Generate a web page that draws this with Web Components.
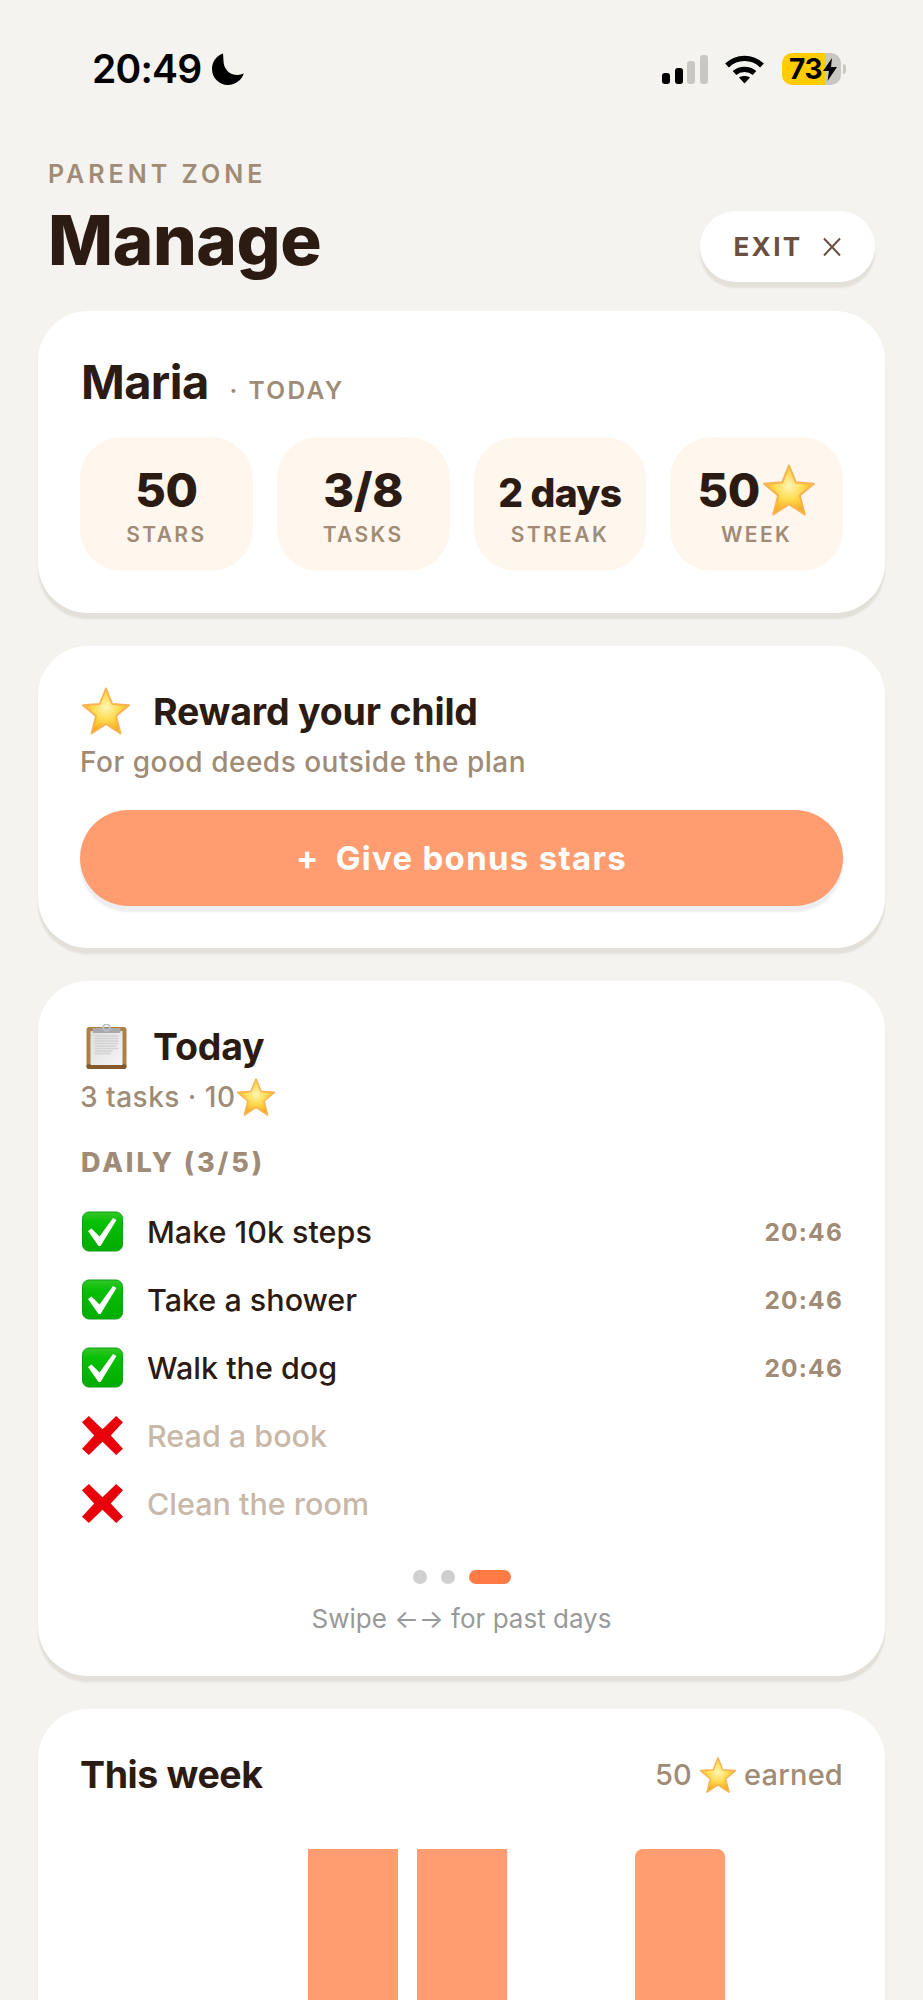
<!DOCTYPE html>
<html lang="en">
<head>
<meta charset="utf-8">
<title>Manage</title>
<style>
html, body { margin: 0; height: 2000px; overflow: hidden; background: #f5f3ef; }
body { font-family: Inter, "Liberation Sans", sans-serif; color: #2c1b12; }
</style>
</head>
<body>
<parent-screen>
  <status-bar slot="top"></status-bar>
  <page-header slot="top"></page-header>

  <app-card>
    <child-summary name="Maria" when="· TODAY">
      <stat-tile label="STARS">50</stat-tile>
      <stat-tile label="TASKS">3/8</stat-tile>
      <stat-tile label="STREAK" small>2 days</stat-tile>
      <stat-tile label="WEEK">50<emoji-icon name="star" size="54" style="margin-left:2px"></emoji-icon></stat-tile>
    </child-summary>
  </app-card>

  <app-card>
    <card-title icon="star" text="Reward your child"></card-title>
    <card-note>For good deeds outside the plan</card-note>
    <bonus-button>Give bonus stars</bonus-button>
  </app-card>

  <app-card>
    <card-title icon="clipboard" size="45" text="Today"></card-title>
    <card-note>3 tasks · 10<emoji-icon name="star" size="40"></emoji-icon></card-note>
    <task-list heading="DAILY (3/5)">
      <task-row done time="20:46">Make 10k steps</task-row>
      <task-row done time="20:46">Take a shower</task-row>
      <task-row done time="20:46">Walk the dog</task-row>
      <task-row>Read a book</task-row>
      <task-row>Clean the room</task-row>
    </task-list>
    <page-dots></page-dots>
  </app-card>

  <app-card>
    <week-chart></week-chart>
  </app-card>
</parent-screen>

<script>
const screenTemplate = document.createElement("template");
screenTemplate.innerHTML = `
<style>
:host { display: block; height: 2000px; overflow: hidden; }
.cards { display: flex; flex-direction: column; gap: 33px; padding: 0 38px; }
</style>
<slot name="top"></slot>
<div class="cards"><slot></slot></div>
`;

class ParentScreen extends HTMLElement {
  constructor() {
    super();
    this.attachShadow({ mode: "open" }).appendChild(screenTemplate.content.cloneNode(true));
  }
}

const statusTemplate = document.createElement("template");
statusTemplate.innerHTML = `
<style>
:host { display: flex; justify-content: space-between; align-items: center; height: 32px; padding: 53px 77px 0 92px; color: #000; }
.left, .right { display: flex; align-items: center; }
.time { font: 600 39px/32px Inter, sans-serif; letter-spacing: -0.8px; width: 118px; }
.moon { margin-left: 2px; }
.signal { display: flex; align-items: flex-end; gap: 4.7px; height: 30px; }
.signal i { display: block; width: 8px; border-radius: 3px; background: #c8c7c3; }
.signal i.on { background: #000; }
.wifi { margin-left: 17px; }
.battery { display: flex; position: relative; margin-left: 18px; width: 59px; height: 32px; border-radius: 10px; overflow: hidden; background: linear-gradient(90deg, #ffcc00 43px, #c8c7c3 43px); }
.battery span { font: 700 28px/32px Inter, sans-serif; padding-left: 7px; letter-spacing: -0.4px; }
.battery svg { position: absolute; left: 41px; top: 5px; }
.nub { width: 3px; height: 10px; margin-left: 2px; background: #c8c7c3; border-radius: 0 3px 3px 0; }
</style>
<div class="left">
  <span class="time">20:49</span>
  <svg class="moon" width="32" height="32" viewBox="0 0 32 32"><path d="M11 .5C4.500 2.500 0 8.800 0 16 0 24.800 7.200 32 16 32 23.500 32 29.800 27 31.800 20.300 30 21.500 27.800 22 25.500 22 17.500 22 11.500 15.800 11.500 8 11.500 5.300 11.100 2.800 11 .5Z" fill="#000"/></svg>
</div>
<div class="right">
  <div class="signal"><i class="on" style="height:11px"></i><i class="on" style="height:16px"></i><i style="height:23px"></i><i style="height:29px"></i></div>
  <svg class="wifi" width="39" height="30" viewBox="0 0 39 30" fill="none" stroke="#000" stroke-width="5.4">
    <path d="M2 11.500C12 2 27 2 37 11.500"/><path d="M9.500 19C15 14.200 24 14.200 29.500 19"/>
    <path d="M14 23.600C17 21.600 22 21.600 25 23.600L19.500 29.500Z" fill="#000" stroke="none"/>
  </svg>
  <div class="battery"><span>73</span>
    <svg width="14" height="23" viewBox="0 0 14 23"><path d="M9 0 0 13H6L4.500 23 14 9H8Z" fill="#000"/></svg>
  </div>
  <div class="nub"></div>
</div>
`;

class StatusBar extends HTMLElement {
  constructor() {
    super();
    this.attachShadow({ mode: "open" }).appendChild(statusTemplate.content.cloneNode(true));
  }
}

const headerTemplate = document.createElement("template");
headerTemplate.innerHTML = `
<style>
:host { display: block; height: 226px; padding: 74px 48px 0 48px; box-sizing: border-box; }
.eyebrow { font: 600 25px/30px Inter, sans-serif; letter-spacing: 4px; color: #a08c76; }
.row { display: flex; justify-content: space-between; align-items: flex-start; }
h1 { margin: 0; font: 800 69px/80px Inter, sans-serif; letter-spacing: -0.4px; color: #2c1b12; padding-top: 11px; }
.exit { display: flex; align-items: center; justify-content: center; gap: 19px; width: 175px; height: 71px; margin-top: 22px; border-radius: 36px; background: #fff; box-shadow: 0 6px 2px rgba(70,50,30,.1); font: 700 26px/1 Inter, sans-serif; letter-spacing: 2.4px; color: #6b4f3f; }
</style>
<div class="eyebrow">PARENT ZONE</div>
<div class="row">
  <h1>Manage</h1>
  <div class="exit">EXIT
    <svg width="20" height="20" viewBox="0 0 20 20" stroke="#6b4f3f" stroke-width="2"><path d="M2 1.500 18 18.500M18 1.500 2 18.500"/></svg>
  </div>
</div>
`;

class PageHeader extends HTMLElement {
  constructor() {
    super();
    this.attachShadow({ mode: "open" }).appendChild(headerTemplate.content.cloneNode(true));
  }
}

const cardTemplate = document.createElement("template");
cardTemplate.innerHTML = `
<style>
:host { display: block; padding: 42px; background: #fff; border-radius: 50px; box-shadow: 0 6px 2px rgba(70,50,30,.1); }
</style>
<slot></slot>
`;

class AppCard extends HTMLElement {
  constructor() {
    super();
    this.attachShadow({ mode: "open" }).appendChild(cardTemplate.content.cloneNode(true));
  }
}

const emojiShapes = {
  star: `<svg viewBox="0 0 100 100" width="100%" height="100%">
    <defs><radialGradient id="s" cx="50%" cy="42%" r="55%"><stop offset="0" stop-color="#fff6b8"/><stop offset=".5" stop-color="#ffdc50"/><stop offset="1" stop-color="#f7a81b"/></radialGradient></defs>
    <path d="M50 5 62.500 36 96 38.500 70 60 79 95 50 76 21 95 30 60 4 38.500 37.500 36Z" fill="url(#s)" stroke="#f8b452" stroke-width="4" stroke-linejoin="round"/></svg>`,
  check: `<svg viewBox="0 0 41 40" width="100%" height="100%">
    <defs><linearGradient id="c" x1="0" y1="0" x2="0" y2="1"><stop offset="0" stop-color="#35c628"/><stop offset=".25" stop-color="#06c006"/><stop offset="1" stop-color="#00ac00"/></linearGradient></defs>
    <rect x=".5" y=".5" width="40" height="39" rx="6.500" fill="url(#c)" stroke="#0c9f12"/>
    <path d="M6 19.500 9.500 17 17.500 25 31 6.500 34.500 8.500 18.500 34.500H16.500Z" fill="#fff"/></svg>`,
  cross: `<svg viewBox="0 0 42 40" width="100%" height="100%">
    <path d="M7 0 21 13.500 35 0 42 6.500 29.500 20 42 33.500 35 40 21 26.500 7 40 0 33.500 12.500 20 0 6.500Z" fill="#e8000b"/></svg>`,
  clipboard: `<svg viewBox="0 0 40 45" width="100%" height="100%">
    <defs><linearGradient id="p" x1="0" y1="0" x2="1" y2="1"><stop offset="0" stop-color="#dedede"/><stop offset="1" stop-color="#f4f4f4"/></linearGradient></defs>
    <rect x="0" y="3" width="40" height="42" rx="3" fill="#ad8048"/>
    <rect x="0" y="40" width="40" height="5" rx="2.500" fill="#85592d"/>
    <rect x="4" y="7" width="32" height="34" fill="url(#p)"/>
    <path d="M8 12H32M8 14.500H32M8 17H32M8 19.500H32M8 22H30M8 24.500H32M8 27H26M8 29.500H24" stroke="#d2d2d2" stroke-width="1.600"/>
    <rect x="6" y="4" width="28" height="5" rx="1" fill="#a9a9a9"/>
    <circle cx="20" cy="3.500" r="3.300" fill="none" stroke="#b6c2cf" stroke-width="1.800"/></svg>`
};

class EmojiIcon extends HTMLElement {
  constructor() {
    super();
    this.attachShadow({ mode: "open" });
  }

  connectedCallback() {
    const size = this.getAttribute("size") || 40;
    this.shadowRoot.innerHTML = `
      <style>:host { display: inline-block; flex: none; vertical-align: middle; width: ${size}px; height: ${size}px; }</style>
      ${emojiShapes[this.getAttribute("name")]}`;
  }
}

const summaryTemplate = document.createElement("template");
summaryTemplate.innerHTML = `
<style>
:host { display: block; }
.head { display: flex; align-items: baseline; height: 58px; margin-bottom: 26px; }
.name { font: 700 47px/58px Inter, sans-serif; letter-spacing: -0.6px; color: #2c1b12; margin-left: 1px; }
.when { font: 600 24.500px/58px Inter, sans-serif; letter-spacing: 2.400px; color: #a08c76; margin-left: 21px; }
.tiles { display: grid; grid-template-columns: repeat(4, 1fr); gap: 24px; }
</style>
<div class="head"><span class="name"></span><span class="when"></span></div>
<div class="tiles"><slot></slot></div>
`;

class ChildSummary extends HTMLElement {
  constructor() {
    super();
    this._ShadowRoot = this.attachShadow({ mode: "open" });
    this._ShadowRoot.appendChild(summaryTemplate.content.cloneNode(true));
    this._ShadowRoot.querySelector(".name").textContent = this.getAttribute("name");
    this._ShadowRoot.querySelector(".when").textContent = this.getAttribute("when");
  }
}

const tileTemplate = document.createElement("template");
tileTemplate.innerHTML = `
<style>
:host { display: flex; flex-direction: column; align-items: center; height: 134px; border-radius: 42px; background: #fff6ee; }
.value { display: flex; align-items: center; justify-content: center; height: 60px; margin-top: 23px; white-space: nowrap; font: 800 47px/60px Inter, sans-serif; letter-spacing: -0.4px; color: #2c1b12; }
:host([small]) .value { font-size: 39px; letter-spacing: -0.6px; padding-top: 6px; height: 54px; }
.label { font: 600 21px/24px Inter, sans-serif; letter-spacing: 2.4px; color: #a08c76; margin-top: 3px; }
</style>
<div class="value"><slot></slot></div>
<div class="label"></div>
`;

class StatTile extends HTMLElement {
  constructor() {
    super();
    this.attachShadow({ mode: "open" }).appendChild(tileTemplate.content.cloneNode(true));
    this.shadowRoot.querySelector(".label").textContent = this.getAttribute("label");
  }
}

const titleTemplate = document.createElement("template");
titleTemplate.innerHTML = `
<style>
:host { display: flex; align-items: center; height: 46px; }
.icon { display: flex; justify-content: center; width: 52px; margin-right: 21px; }
.text { font: 700 37.500px/46px Inter, sans-serif; letter-spacing: -0.2px; color: #2c1b12; padding-top: 2px; }
</style>
<span class="icon"></span><span class="text"></span>
`;

class CardTitle extends HTMLElement {
  constructor() {
    super();
    this.attachShadow({ mode: "open" }).appendChild(titleTemplate.content.cloneNode(true));
    const icon = document.createElement("emoji-icon");
    icon.setAttribute("name", this.getAttribute("icon"));
    icon.setAttribute("size", this.getAttribute("size") || "50");
    this.shadowRoot.querySelector(".icon").appendChild(icon);
    this.shadowRoot.querySelector(".text").textContent = this.getAttribute("text");
  }
}

const noteTemplate = document.createElement("template");
noteTemplate.innerHTML = `
<style>
:host { display: flex; align-items: center; height: 34px; margin-top: 11px; font: 500 28px/34px Inter, sans-serif; letter-spacing: 0.5px; color: #a08c76; }
</style>
<slot></slot>
`;

class CardNote extends HTMLElement {
  constructor() {
    super();
    this.attachShadow({ mode: "open" }).appendChild(noteTemplate.content.cloneNode(true));
  }
}

const bonusTemplate = document.createElement("template");
bonusTemplate.innerHTML = `
<style>
:host { display: flex; align-items: center; justify-content: center; gap: 16px; height: 96px; margin-top: 31px; border-radius: 48px; background: #ff9d70; box-shadow: 0 6px 2px rgba(90,90,110,.1); font: 700 33px/1 Inter, sans-serif; letter-spacing: 1.300px; color: #fff; }
</style>
<span>+</span><span><slot></slot></span>
`;

class BonusButton extends HTMLElement {
  constructor() {
    super();
    this.attachShadow({ mode: "open" }).appendChild(bonusTemplate.content.cloneNode(true));
  }
}

const listTemplate = document.createElement("template");
listTemplate.innerHTML = `
<style>
:host { display: block; margin-top: 34px; }
.heading { font: 800 27px/30px Inter, sans-serif; letter-spacing: 2.900px; color: #a08c76; margin-bottom: 20px; margin-left: 1px; }
</style>
<div class="heading"></div>
<slot></slot>
`;

class TaskList extends HTMLElement {
  constructor() {
    super();
    this.attachShadow({ mode: "open" }).appendChild(listTemplate.content.cloneNode(true));
    this.shadowRoot.querySelector(".heading").textContent = this.getAttribute("heading");
  }
}

const rowTemplate = document.createElement("template");
rowTemplate.innerHTML = `
<style>
:host { display: flex; align-items: center; height: 68px; font: 500 30.500px/36px Inter, sans-serif; color: #c8b8a8; }
:host([done]) { color: #2c1b12; }
.mark { width: 41px; height: 41px; margin: -2px 24px 0 2px; flex: none; }
.label { flex: 1; }
.time { font: 700 24.500px/36px Inter, sans-serif; letter-spacing: 1.200px; color: #a08c76; }
</style>
<span class="mark"></span><span class="label"><slot></slot></span><span class="time"></span>
`;

class TaskRow extends HTMLElement {
  constructor() {
    super();
    this.attachShadow({ mode: "open" }).appendChild(rowTemplate.content.cloneNode(true));
    const icon = document.createElement("emoji-icon");
    icon.setAttribute("name", this.hasAttribute("done") ? "check" : "cross");
    icon.setAttribute("size", "41");
    this.shadowRoot.querySelector(".mark").appendChild(icon);
    this.shadowRoot.querySelector(".time").textContent = this.getAttribute("time") || "";
  }
}

const dotsTemplate = document.createElement("template");
dotsTemplate.innerHTML = `
<style>
:host { display: block; margin-top: 32px; text-align: center; }
.dots { display: flex; justify-content: center; gap: 14px; height: 14px; }
.dots i { width: 14px; border-radius: 7px; background: #cfcfcf; }
.dots i.on { width: 42px; background: #ff7a45; }
.hint { margin-top: 20px; font: 400 26px/30px Inter, sans-serif; color: #999; }
</style>
<div class="dots"><i></i><i></i><i class="on"></i></div>
<div class="hint">Swipe ←→ for past days</div>
`;

class PageDots extends HTMLElement {
  constructor() {
    super();
    this.attachShadow({ mode: "open" }).appendChild(dotsTemplate.content.cloneNode(true));
  }
}

const chartTemplate = document.createElement("template");
chartTemplate.innerHTML = `
<style>
:host { display: block; }
.head { display: flex; justify-content: space-between; align-items: center; height: 46px; }
.title { font: 700 37.500px/46px Inter, sans-serif; letter-spacing: -0.4px; color: #2c1b12; padding-top: 2px; }
.earned { display: flex; align-items: center; gap: 7px; padding-top: 1px; font: 500 29px/34px Inter, sans-serif; letter-spacing: 0.2px; color: #a08c76; }
.bars { display: grid; grid-template-columns: repeat(7, 1fr); gap: 18.400px; height: 220px; margin-top: 52px; padding: 0 9px 0 10px; }
.bars i { background: #ff9d70; }
.bars i.round { border-radius: 8px 8px 0 0; }
.bars i.empty { background: transparent; }
</style>
<div class="head">
  <span class="title">This week</span>
  <span class="earned">50 <emoji-icon name="star" size="38"></emoji-icon> earned</span>
</div>
<div class="bars">
  <i class="empty"></i><i class="empty"></i><i></i><i></i><i class="empty"></i><i class="round"></i><i class="empty"></i>
</div>
`;

class WeekChart extends HTMLElement {
  constructor() {
    super();
    this.attachShadow({ mode: "open" }).appendChild(chartTemplate.content.cloneNode(true));
  }
}

customElements.define("emoji-icon", EmojiIcon);
customElements.define("parent-screen", ParentScreen);
customElements.define("status-bar", StatusBar);
customElements.define("page-header", PageHeader);
customElements.define("app-card", AppCard);
customElements.define("child-summary", ChildSummary);
customElements.define("stat-tile", StatTile);
customElements.define("card-title", CardTitle);
customElements.define("card-note", CardNote);
customElements.define("bonus-button", BonusButton);
customElements.define("task-list", TaskList);
customElements.define("task-row", TaskRow);
customElements.define("page-dots", PageDots);
customElements.define("week-chart", WeekChart);
</script>
</body>
</html>
